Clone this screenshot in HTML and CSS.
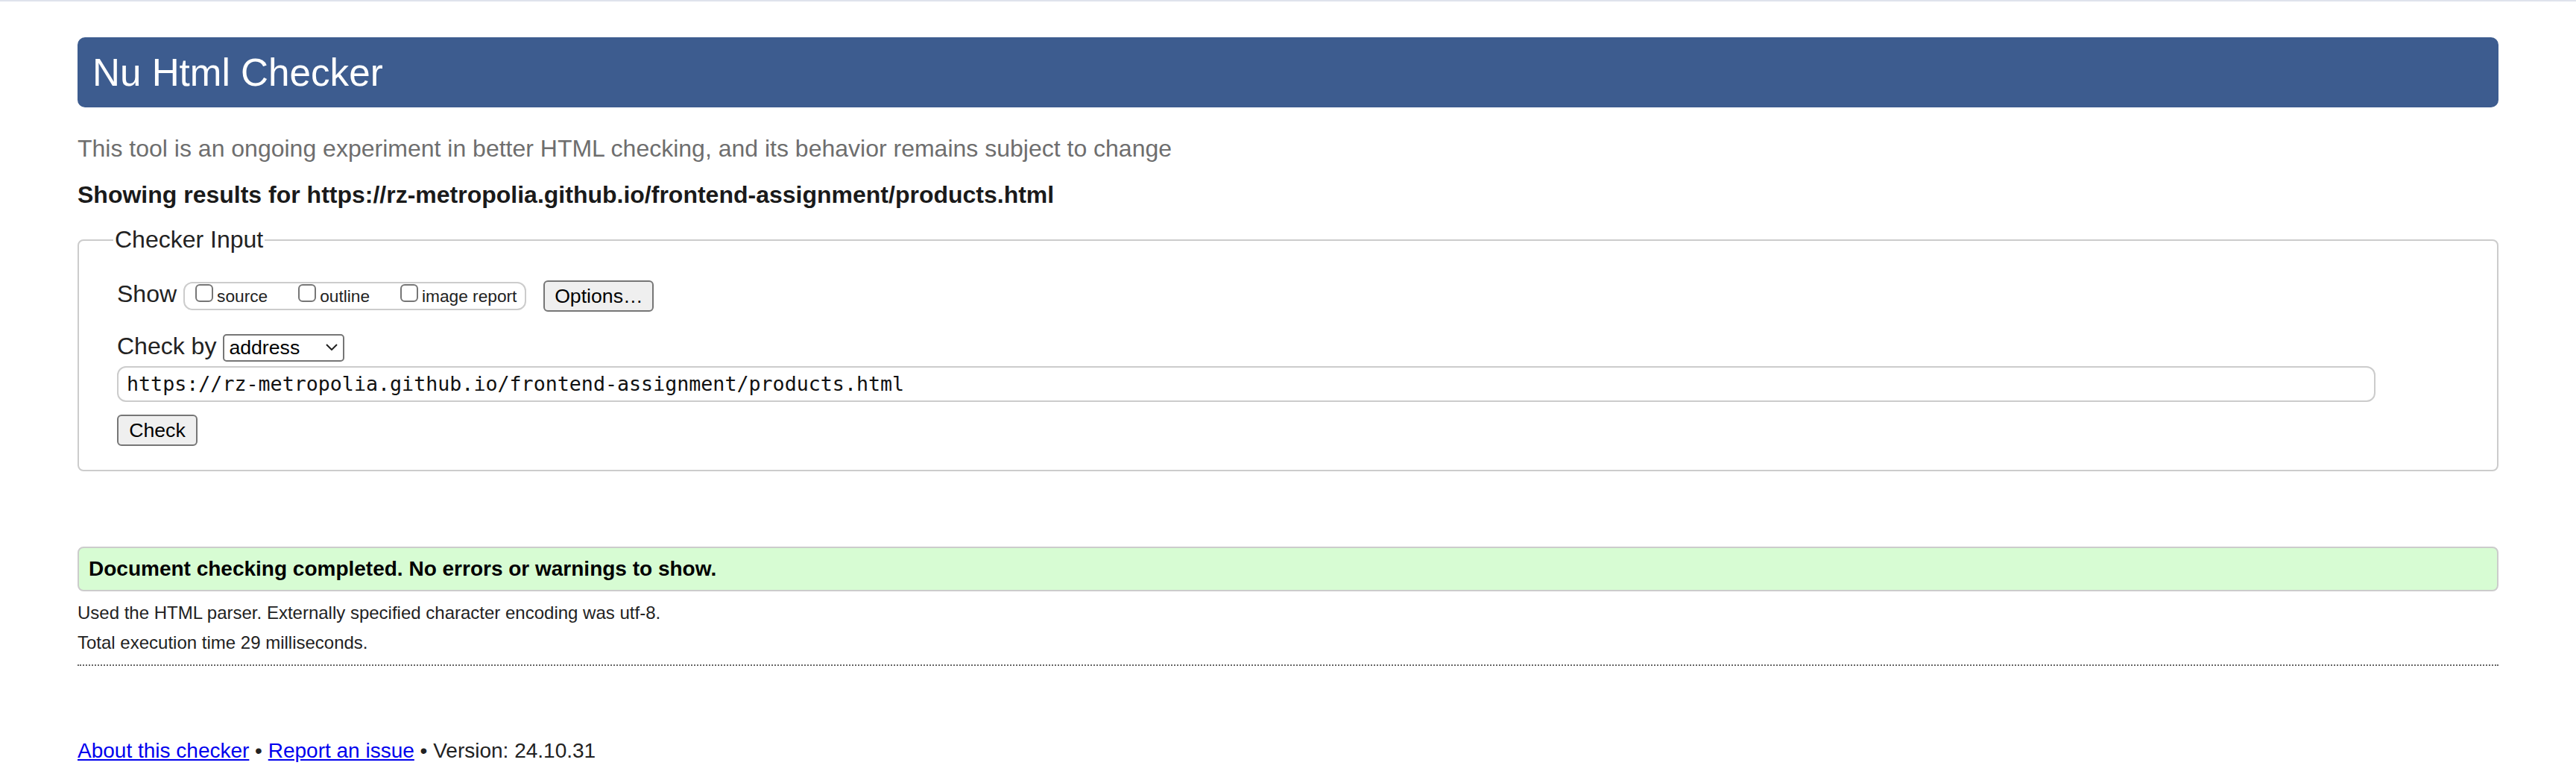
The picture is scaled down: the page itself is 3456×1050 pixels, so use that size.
FILE: index.html
```html
<!DOCTYPE html>
<html lang="en">
<head>
<meta charset="utf-8">
<title>Showing results for https://rz-metropolia.github.io/frontend-assignment/products.html - Nu Html Checker</title>
<link rel="stylesheet" href="styles.css">
</head>
<body>
<div class="page">
  <h1 class="brand">Nu Html Checker</h1>
  <p class="lead">This tool is an ongoing experiment in better HTML checking, and its behavior remains subject to change</p>
  <p class="results-for">Showing results for https://rz-metropolia.github.io/frontend-assignment/products.html</p>
  <form class="checker-form">
    <fieldset class="checker-input">
      <legend class="legend">Checker Input</legend>
      <div class="row row-show">
        <span class="show-label">Show</span>
        <div class="show-group">
          <label class="opt"><input type="checkbox" class="cb"><span>source</span></label>
          <label class="opt"><input type="checkbox" class="cb"><span>outline</span></label>
          <label class="opt"><input type="checkbox" class="cb"><span>image report</span></label>
        </div>
        <button type="button" class="btn btn-options">Options…</button>
      </div>
      <div class="row row-by">
        <span class="by-label">Check by</span>
        <span class="select-wrap">
          <select class="select"><option>address</option><option>file upload</option><option>text input</option></select>
          <svg class="chev" viewBox="0 0 16 9" aria-hidden="true"><polyline points="1,1 8,8 15,1" fill="none" stroke="#222" stroke-width="2"/></svg>
        </span>
      </div>
      <div class="row row-url">
        <input class="url" type="url" value="https://rz-metropolia.github.io/frontend-assignment/products.html">
      </div>
      <div class="row row-check">
        <button type="button" class="btn btn-check">Check</button>
      </div>
    </fieldset>
  </form>
  <div class="success"><p>Document checking completed. No errors or warnings to show.</p></div>
  <p class="details">Used the HTML parser. Externally specified character encoding was utf-8.</p>
  <p class="details details-time">Total execution time 29 milliseconds.</p>
  <hr class="sep">
  <p class="footer"><a href="#">About this checker</a> • <a href="#">Report an issue</a> • Version: 24.10.31</p>
</div>
</body>
</html>
```
FILE: styles.css
```css
html {
  background: #fff;
}

body {
  margin: 0;
  border-top: 2px solid #dfe3ec;
  background: #fff;
  color: #222;
  font-family: "Liberation Sans", Arial, Helvetica, sans-serif;
  font-size: 32px;
  line-height: 37px;
}

.page {
  padding: 48px 104px 40px;
}

.brand {
  margin: 0;
  padding: 17.5px 20px;
  font-size: 51.2px;
  line-height: 59px;
  font-weight: normal;
  color: #fff;
  background: #3d5c8f;
  border-radius: 10px;
}

.lead {
  margin: 37px 0 0;
  color: #6e6e6e;
}

.results-for {
  margin: 25px 0 0;
  font-weight: bold;
  color: #1a1a1a;
}

.checker-form {
  margin: 23px 0 0;
}

.checker-input {
  margin: 0;
  padding: 36px 50px 32px 51px;
  border: 2px solid #cccccc;
  border-radius: 8px;
  min-width: 0;
}

.legend {
  padding: 0 2px;
  margin-left: -5px;
  font-size: 32px;
  line-height: 37px;
  color: #222;
}

.row {
  display: flex;
  align-items: center;
}

.row-show {
  height: 42px;
}

.show-label {
  margin-bottom: 5px;
}

.show-group {
  display: flex;
  align-items: baseline;
  gap: 41px;
  margin-left: 9px;
  height: 38px;
  box-sizing: border-box;
  border: 2px solid #cccccc;
  border-radius: 12px;
  padding: 1px 11px 0 14px;
}

.opt {
  display: flex;
  align-items: baseline;
  gap: 5px;
  font-size: 22.7px;
  line-height: 24px;
  color: #222;
}

.cb {
  appearance: none;
  -webkit-appearance: none;
  margin: 0;
  width: 24px;
  height: 24px;
  box-sizing: border-box;
  border: 2px solid #767676;
  border-radius: 6px;
  background: #fff;
}

.btn {
  font-family: "Liberation Sans", Arial, Helvetica, sans-serif;
  font-size: 26.67px;
  line-height: 30px;
  color: #000;
  background: #efefef;
  border: 2px solid #767676;
  border-radius: 6px;
  padding: 0;
  height: 42px;
  box-sizing: border-box;
}

.btn-options {
  width: 148px;
  margin-left: 23px;
}

.row-by {
  margin-top: 28px;
  align-items: baseline;
}

.by-label {
  line-height: 37px;
}

.select-wrap {
  position: relative;
  display: inline-block;
  margin-left: 9px;
}

.select {
  appearance: none;
  -webkit-appearance: none;
  display: block;
  width: 163px;
  height: 37px;
  box-sizing: border-box;
  border: 2px solid #767676;
  border-radius: 5px;
  background: #fff;
  color: #000;
  font-family: "Liberation Sans", Arial, Helvetica, sans-serif;
  font-size: 26.67px;
  padding: 0 30px 0 6px;
  margin: 0;
}

.chev {
  position: absolute;
  right: 9px;
  top: 13px;
  width: 16px;
  height: 9px;
  pointer-events: none;
}

.row-url {
  margin-top: 6px;
}

.url {
  width: 3030px;
  height: 48px;
  box-sizing: border-box;
  margin: 0;
  border: 2px solid #cccccc;
  border-radius: 12px;
  padding: 0 11px;
  font-family: "DejaVu Sans Mono", "Liberation Mono", monospace;
  font-size: 26.67px;
  color: #111;
  background: #fff;
}

.row-check {
  margin-top: 17px;
}

.btn-check {
  width: 108px;
}

.success {
  margin-top: 101px;
  border: 2px solid #cccccc;
  border-radius: 8px;
  background: #d7fcd3;
  padding: 12px 13px;
}

.success p {
  margin: 0;
  font-size: 28px;
  line-height: 32px;
  font-weight: bold;
  color: #000;
}

.details {
  margin: 15px 0 0;
  font-size: 24px;
  line-height: 28px;
  color: #222;
}

.details-time {
  margin-top: 12px;
}

.sep {
  margin: 15px 0 0;
  height: 0;
  border: 0;
  border-top: 2px dotted #666;
}

.footer {
  margin: 98px 0 0;
  font-size: 28px;
  line-height: 32px;
  color: #222;
}

.footer a {
  color: #0000ee;
  text-decoration: underline;
}
```
